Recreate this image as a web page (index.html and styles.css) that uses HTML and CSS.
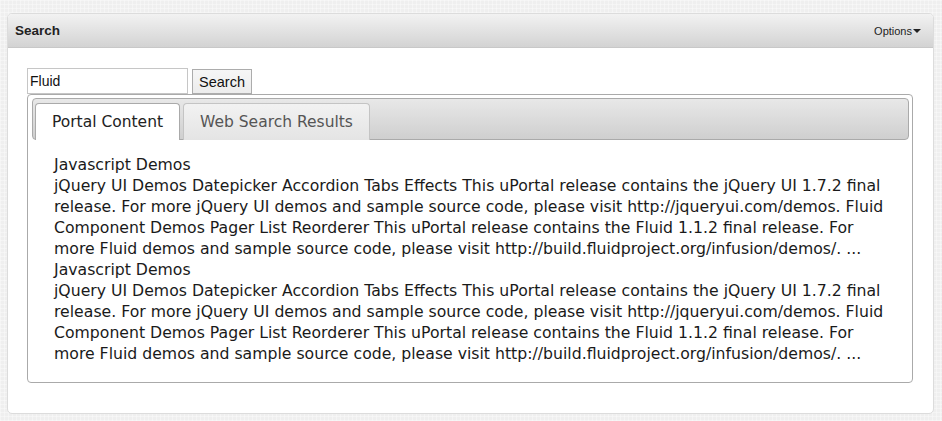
FILE: index.html
```
<!DOCTYPE html>
<html>
<head>
<meta charset="utf-8">
<link rel="stylesheet" href="styles.css">
</head>
<body>
<div class="portlet">
  <div class="portlet-head">
    <span class="portlet-title">Search</span>
    <span class="options">Options<span class="caret"></span></span>
  </div>
  <div class="portlet-body">
    <form class="search-form">
      <input class="search-input" type="text" value="Fluid">
      <button class="search-btn" type="button">Search</button>
    </form>
    <div class="tabs">
      <ul class="tab-nav">
        <li class="tab active">Portal Content</li>
        <li class="tab">Web Search Results</li>
      </ul>
      <div class="tab-panel">
        <div class="result">
          <div class="result-title">Javascript Demos</div>
          <div class="result-text">jQuery UI Demos Datepicker Accordion Tabs Effects This uPortal release contains the jQuery UI 1.7.2 final release. For more jQuery UI demos and sample source code, please visit http://jqueryui.com/demos. Fluid Component Demos Pager List Reorderer This uPortal release contains the Fluid 1.1.2 final release. For more Fluid demos and sample source code, please visit http://build.fluidproject.org/infusion/demos/. ...</div>
        </div>
        <div class="result">
          <div class="result-title">Javascript Demos</div>
          <div class="result-text">jQuery UI Demos Datepicker Accordion Tabs Effects This uPortal release contains the jQuery UI 1.7.2 final release. For more jQuery UI demos and sample source code, please visit http://jqueryui.com/demos. Fluid Component Demos Pager List Reorderer This uPortal release contains the Fluid 1.1.2 final release. For more Fluid demos and sample source code, please visit http://build.fluidproject.org/infusion/demos/. ...</div>
        </div>
      </div>
    </div>
  </div>
</div>
</body>
</html>
```
FILE: styles.css
```
html, body {
  margin: 0;
  padding: 0;
}
body {
  background-color: #efefef;
  background-image:
    repeating-linear-gradient(0deg, rgba(255,255,255,0.35) 0 1px, transparent 1px 4px),
    repeating-linear-gradient(90deg, rgba(255,255,255,0.35) 0 1px, transparent 1px 4px);
  padding: 13px 8px 7px 7px;
  font-family: "Liberation Sans", Arial, sans-serif;
  width: 942px;
  height: 421px;
  box-sizing: border-box;
}
.portlet {
  background: #fff;
  border: 1px solid #dcdcdc;
  border-radius: 5px;
  height: 401px;
  box-sizing: border-box;
  overflow: hidden;
}
.portlet-head {
  height: 34px;
  box-sizing: border-box;
  background: linear-gradient(#f2f2f2, #d3d3d3);
  border-bottom: 1px solid #c8c8c8;
  display: flex;
  align-items: center;
  justify-content: space-between;
  padding: 0 12px 0 7px;
}
.portlet-title {
  font-weight: bold;
  font-size: 13.5px;
  color: #222;
}
.options {
  font-size: 11px;
  color: #222;
  display: flex;
  align-items: center;
}
.caret {
  display: inline-block;
  width: 0;
  height: 0;
  border-left: 4px solid transparent;
  border-right: 4px solid transparent;
  border-top: 4px solid #222;
  margin-left: 1px;
}
.portlet-body {
  padding: 20px 19px 0 19px;
}
.search-form {
  display: flex;
  align-items: flex-end;
  gap: 4px;
  margin: 0;
}
.search-input {
  width: 161px;
  height: 26px;
  box-sizing: border-box;
  border: 1px solid #c6c6c6;
  padding: 0 2px;
  margin: 0;
  font-family: "Liberation Sans", Arial, sans-serif;
  font-size: 14px;
  color: #111;
  outline: none;
}
.search-btn {
  width: 60px;
  height: 25px;
  box-sizing: border-box;
  border: 1px solid #acacac;
  background: linear-gradient(#f6f6f6, #ececec);
  font-family: "Liberation Sans", Arial, sans-serif;
  font-size: 14.5px;
  color: #111;
  padding: 0;
  margin: 0;
}
.tabs {
  width: 886px;
  height: 289px;
  box-sizing: border-box;
  border: 1px solid #aaa;
  border-radius: 4px;
  padding: 3px 3px 0 4px;
}
.tab-nav {
  list-style: none;
  margin: 0;
  padding: 4px 2px 0 2px;
  height: 42px;
  box-sizing: border-box;
  border: 1px solid #aaa;
  border-radius: 4px;
  background: linear-gradient(#e8e8e8, #cfcfcf);
  display: flex;
  align-items: flex-end;
  gap: 3px;
}
.tab {
  height: 37px;
  margin-bottom: -1px;
  box-sizing: border-box;
  border: 1px solid #c4c4c4;
  border-bottom: none;
  border-radius: 4px 4px 0 0;
  background: linear-gradient(#f2f2f2, #e4e4e4);
  font-family: "DejaVu Sans", Verdana, sans-serif;
  font-size: 15.5px;
  color: #555;
  display: flex;
  align-items: center;
  justify-content: center;
}
.tab:first-child { width: 145px; }
.tab:nth-child(2) { width: 187px; }
.tab.active {
  background: #fff;
  border-color: #aaa;
  color: #222;
}
.tab-panel {
  padding: 14px 20px 0 22px;
  font-family: "DejaVu Sans", Verdana, sans-serif;
  font-size: 15.7px;
  line-height: 21px;
  color: #1a1a1a;
}
```
